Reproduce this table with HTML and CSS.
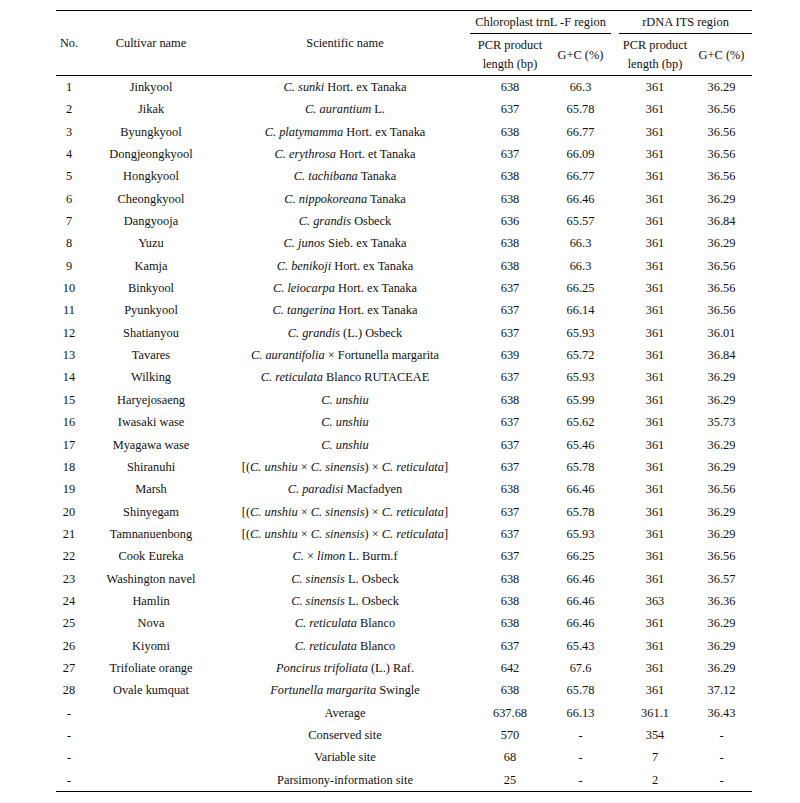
FILE: index.html
```html
<!DOCTYPE html>
<html lang="en">
<head>
<meta charset="utf-8">
<title>Citrus cultivars table</title>
<link rel="stylesheet" href="styles.css">
</head>
<body>
<div class="page">
<table class="data">
<colgroup>
<col class="c-no"><col class="c-cult"><col class="c-sci"><col class="c-pcr1"><col class="c-gc1"><col class="c-gap"><col class="c-pcr2"><col class="c-gc2">
</colgroup>
<thead>
<tr class="h1">
<th rowspan="2">No.</th>
<th rowspan="2">Cultivar name</th>
<th rowspan="2">Scientific name</th>
<th colspan="2" class="grp">Chloroplast trnL -F region</th>
<th class="gap"></th>
<th colspan="2" class="grp">rDNA ITS region</th>
</tr>
<tr class="h2">
<th>PCR product<br>length (bp)</th>
<th>G+C (%)</th>
<th class="gap"></th>
<th>PCR product<br>length (bp)</th>
<th>G+C (%)</th>
</tr>
</thead>
<tbody>
<tr><td>1</td><td>Jinkyool</td><td><i>C. sunki</i> Hort. ex Tanaka</td><td>638</td><td>66.3</td><td></td><td>361</td><td>36.29</td></tr>
<tr><td>2</td><td>Jikak</td><td><i>C. aurantium</i> L.</td><td>637</td><td>65.78</td><td></td><td>361</td><td>36.56</td></tr>
<tr><td>3</td><td>Byungkyool</td><td><i>C. platymamma</i> Hort. ex Tanaka</td><td>638</td><td>66.77</td><td></td><td>361</td><td>36.56</td></tr>
<tr><td>4</td><td>Dongjeongkyool</td><td><i>C. erythrosa</i> Hort. et Tanaka</td><td>637</td><td>66.09</td><td></td><td>361</td><td>36.56</td></tr>
<tr><td>5</td><td>Hongkyool</td><td><i>C. tachibana</i> Tanaka</td><td>638</td><td>66.77</td><td></td><td>361</td><td>36.56</td></tr>
<tr><td>6</td><td>Cheongkyool</td><td><i>C. nippokoreana</i> Tanaka</td><td>638</td><td>66.46</td><td></td><td>361</td><td>36.29</td></tr>
<tr><td>7</td><td>Dangyooja</td><td><i>C. grandis</i> Osbeck</td><td>636</td><td>65.57</td><td></td><td>361</td><td>36.84</td></tr>
<tr><td>8</td><td>Yuzu</td><td><i>C. junos</i> Sieb. ex Tanaka</td><td>638</td><td>66.3</td><td></td><td>361</td><td>36.29</td></tr>
<tr><td>9</td><td>Kamja</td><td><i>C. benikoji</i> Hort. ex Tanaka</td><td>638</td><td>66.3</td><td></td><td>361</td><td>36.56</td></tr>
<tr><td>10</td><td>Binkyool</td><td><i>C. leiocarpa</i> Hort. ex Tanaka</td><td>637</td><td>66.25</td><td></td><td>361</td><td>36.56</td></tr>
<tr><td>11</td><td>Pyunkyool</td><td><i>C. tangerina</i> Hort. ex Tanaka</td><td>637</td><td>66.14</td><td></td><td>361</td><td>36.56</td></tr>
<tr><td>12</td><td>Shatianyou</td><td><i>C. grandis</i> (L.) Osbeck</td><td>637</td><td>65.93</td><td></td><td>361</td><td>36.01</td></tr>
<tr><td>13</td><td>Tavares</td><td><i>C. aurantifolia</i> × Fortunella margarita</td><td>639</td><td>65.72</td><td></td><td>361</td><td>36.84</td></tr>
<tr><td>14</td><td>Wilking</td><td><i>C. reticulata</i> Blanco RUTACEAE</td><td>637</td><td>65.93</td><td></td><td>361</td><td>36.29</td></tr>
<tr><td>15</td><td>Haryejosaeng</td><td><i>C. unshiu</i></td><td>638</td><td>65.99</td><td></td><td>361</td><td>36.29</td></tr>
<tr><td>16</td><td>Iwasaki wase</td><td><i>C. unshiu</i></td><td>637</td><td>65.62</td><td></td><td>361</td><td>35.73</td></tr>
<tr><td>17</td><td>Myagawa wase</td><td><i>C. unshiu</i></td><td>637</td><td>65.46</td><td></td><td>361</td><td>36.29</td></tr>
<tr><td>18</td><td>Shiranuhi</td><td>[(<i>C. unshiu</i> × <i>C. sinensis</i>) × <i>C. reticulata</i>]</td><td>637</td><td>65.78</td><td></td><td>361</td><td>36.29</td></tr>
<tr><td>19</td><td>Marsh</td><td><i>C. paradisi</i> Macfadyen</td><td>638</td><td>66.46</td><td></td><td>361</td><td>36.56</td></tr>
<tr><td>20</td><td>Shinyegam</td><td>[(<i>C. unshiu</i> × <i>C. sinensis</i>) × <i>C. reticulata</i>]</td><td>637</td><td>65.78</td><td></td><td>361</td><td>36.29</td></tr>
<tr><td>21</td><td>Tamnanuenbong</td><td>[(<i>C. unshiu</i> × <i>C. sinensis</i>) × <i>C. reticulata</i>]</td><td>637</td><td>65.93</td><td></td><td>361</td><td>36.29</td></tr>
<tr><td>22</td><td>Cook Eureka</td><td><i>C.</i> × <i>limon</i> L. Burm.f</td><td>637</td><td>66.25</td><td></td><td>361</td><td>36.56</td></tr>
<tr><td>23</td><td>Washington navel</td><td><i>C. sinensis</i> L. Osbeck</td><td>638</td><td>66.46</td><td></td><td>361</td><td>36.57</td></tr>
<tr><td>24</td><td>Hamlin</td><td><i>C. sinensis</i> L. Osbeck</td><td>638</td><td>66.46</td><td></td><td>363</td><td>36.36</td></tr>
<tr><td>25</td><td>Nova</td><td><i>C. reticulata</i> Blanco</td><td>638</td><td>66.46</td><td></td><td>361</td><td>36.29</td></tr>
<tr><td>26</td><td>Kiyomi</td><td><i>C. reticulata</i> Blanco</td><td>637</td><td>65.43</td><td></td><td>361</td><td>36.29</td></tr>
<tr><td>27</td><td>Trifoliate orange</td><td><i>Poncirus trifoliata</i> (L.) Raf.</td><td>642</td><td>67.6</td><td></td><td>361</td><td>36.29</td></tr>
<tr><td>28</td><td>Ovale kumquat</td><td><i>Fortunella margarita</i> Swingle</td><td>638</td><td>65.78</td><td></td><td>361</td><td>37.12</td></tr>
<tr><td>-</td><td></td><td>Average</td><td>637.68</td><td>66.13</td><td></td><td>361.1</td><td>36.43</td></tr>
<tr><td>-</td><td></td><td>Conserved site</td><td>570</td><td>-</td><td></td><td>354</td><td>-</td></tr>
<tr><td>-</td><td></td><td>Variable site</td><td>68</td><td>-</td><td></td><td>7</td><td>-</td></tr>
<tr><td>-</td><td></td><td>Parsimony-information site</td><td>25</td><td>-</td><td></td><td>2</td><td>-</td></tr>
</tbody>
</table>
</div>
</body>
</html>
```

FILE: styles.css
```css
html, body {
  margin: 0;
  padding: 0;
  background: #fff;
}

.page {
  padding: 10px 0 0 56px;
}

.data {
  width: 696px;
  table-layout: fixed;
  border-collapse: collapse;
  font-family: "Liberation Serif", "Times New Roman", serif;
  font-size: 12.4px;
  color: #111;
  border-top: 1.3px solid #000;
  border-bottom: 1.3px solid #000;
}

.c-no { width: 26px; }
.c-cult { width: 138px; }
.c-sci { width: 250px; }
.c-pcr1 { width: 80px; }
.c-gc1 { width: 61px; }
.c-gap { width: 8px; }
.c-pcr2 { width: 72px; }
.c-gc2 { width: 61px; }

.data th {
  font-weight: normal;
  text-align: center;
  vertical-align: middle;
  padding: 0;
  white-space: nowrap;
}

.data thead tr.h1 th {
  height: 22px;
  line-height: 22px;
}

.data thead tr.h1 th.grp {
  border-bottom: 1.3px solid #000;
}

.data thead tr.h2 th {
  height: 40px;
  line-height: 19px;
  padding-top: 1px;
}

.data thead tr.h2 {
  border-bottom: 1.3px solid #000;
}

.data td {
  text-align: center;
  padding: 0;
  height: 22.35px;
  line-height: 22.35px;
  white-space: nowrap;
}

.data i {
  font-style: italic;
}
```
